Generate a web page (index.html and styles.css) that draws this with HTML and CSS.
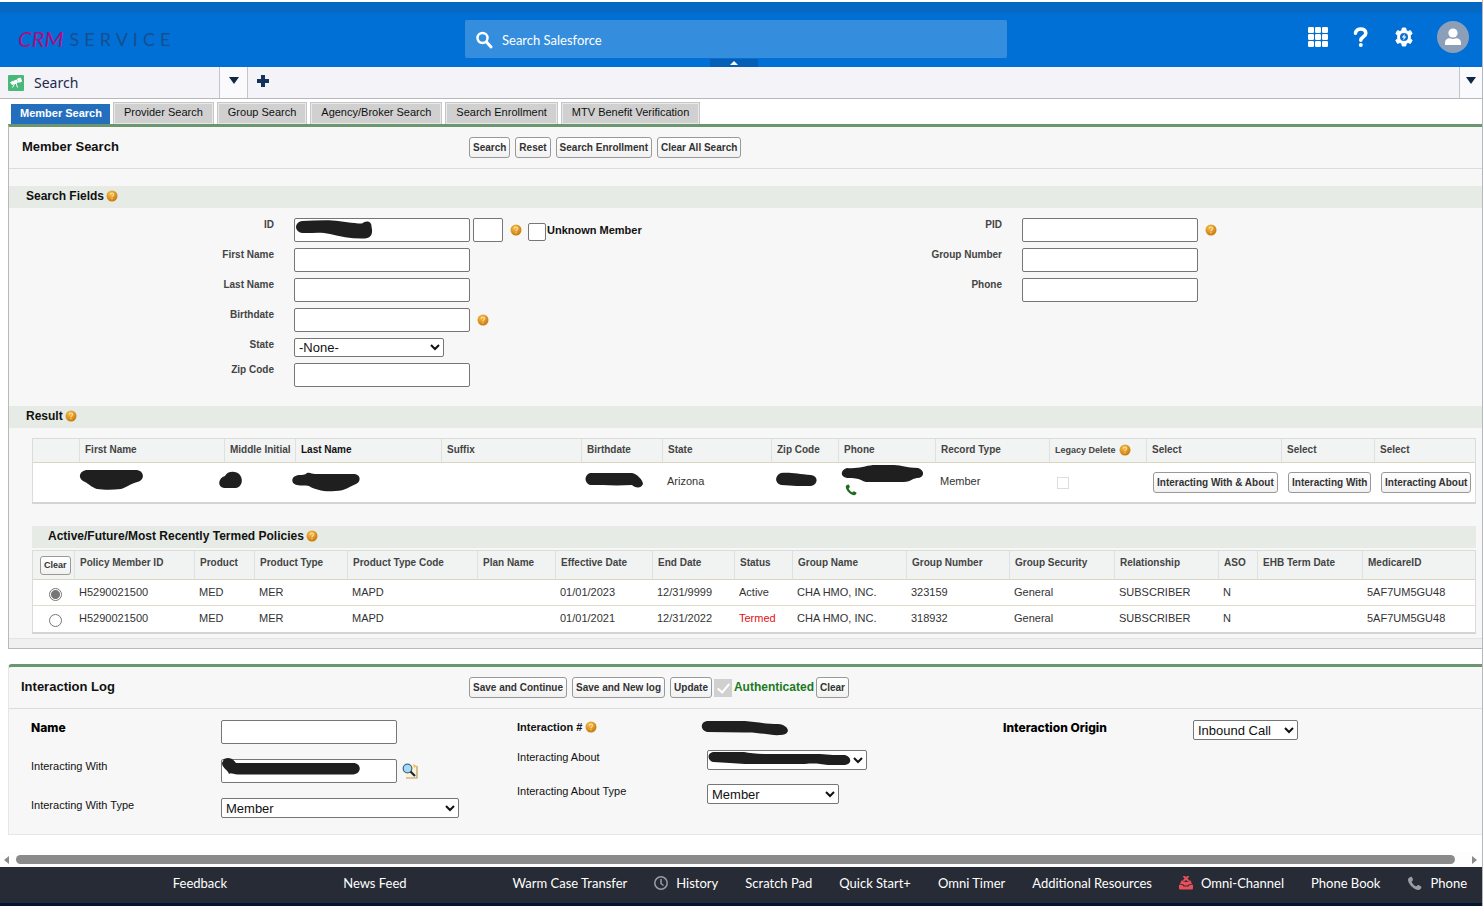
FILE: index.html
```html
<!DOCTYPE html>
<html lang="en">
<head>
<meta charset="utf-8">
<meta name="viewport" content="width=device-width, initial-scale=1">
<title>CRM Service - Member Search</title>
<link rel="stylesheet" href="styles.css">
</head>
<body>
<svg class="defs" aria-hidden="true">
  <defs>
    <radialGradient id="orange" cx="40%" cy="30%" r="70%">
      <stop offset="0" stop-color="#f7c04a"/><stop offset="1" stop-color="#c9790f"/>
    </radialGradient>
    <symbol id="help" viewBox="0 0 12 12">
      <circle cx="6" cy="6" r="5.500" fill="url(#orange)"/>
      <path d="M4.300 4.700C4.300 2.700 7.700 2.700 7.700 4.600C7.700 5.800 6 5.800 6 7.200M6 8.300V9.300" fill="none" stroke="#fbdc97" stroke-width="1.200"/>
    </symbol>
    <symbol id="handset" viewBox="0 0 16 16">
      <path d="M4.500.8C5.200.5 6.700 3.700 6.400 4.400C6.200 4.900 5 5.300 5 6C5.200 7.700 8 10.500 9.900 11C10.600 11 11.100 9.700 11.700 9.600C12.400 9.500 15.500 11.200 15.400 12C15.300 13.300 13.700 15 12.300 15C7.500 15 1 8.500 1 3.800C1 2.500 3 1 4.500.8Z" fill="currentColor"/>
    </symbol>
  </defs>
</svg>

<div class="app">
<header class="topbar">
  <div class="logo"><span class="logo-crm">CRM</span><span class="logo-service">SERVICE</span></div>
  <div class="searchbox">
    <svg width="18" height="18" viewBox="0 0 18 18" aria-hidden="true"><circle cx="6.500" cy="7" r="5" fill="none" stroke="#fff" stroke-width="2.500"/><path d="M10.500 11L15 16" stroke="#fff" stroke-width="3" stroke-linecap="round"/></svg>
    <input type="search" placeholder="Search Salesforce" aria-label="Search Salesforce">
  </div>
  <div class="top-icons">
    <button type="button" aria-label="Apps"><svg width="20" height="20" viewBox="0 0 20 20" fill="#fff"><rect width="6" height="6" rx="1.200"/><rect x="7" width="6" height="6" rx="1.200"/><rect x="14" width="6" height="6" rx="1.200"/><rect y="7" width="6" height="6" rx="1.200"/><rect x="7" y="7" width="6" height="6" rx="1.200"/><rect x="14" y="7" width="6" height="6" rx="1.200"/><rect y="14" width="6" height="6" rx="1.200"/><rect x="7" y="14" width="6" height="6" rx="1.200"/><rect x="14" y="14" width="6" height="6" rx="1.200"/></svg></button>
    <button type="button" aria-label="Help"><svg width="20" height="20" viewBox="0 0 20 20"><path d="M4.500 6.200C5 .6 14.800.6 14.800 6.200C14.800 9.800 9.800 9.500 9.800 13.300" fill="none" stroke="#fff" stroke-width="3.600" stroke-linecap="round"/><circle cx="9.800" cy="18" r="2" fill="#fff"/></svg></button>
    <button type="button" aria-label="Setup"><svg width="20" height="20" viewBox="0 0 20 20"><path d="M8.300 1h3.400l.5 2.500 1.800 1 2.400-.9 1.800 3-1.900 1.700v3.400l1.900 1.700-1.800 3-2.400-.9-1.800 1-.5 2.500H8.300l-.5-2.500-1.800-1-2.400.9-1.800-3 1.900-1.700V8.300L1.800 6.600l1.800-3 2.400.9 1.800-1z" fill="#fff" stroke="#fff" stroke-linejoin="round"/><circle cx="10" cy="10" r="4" fill="#0d6fd0"/><path d="M10.800 6.800L7.800 10.600H9.800L9.200 13.400L12.300 9.500H10.300Z" fill="#fff"/></svg></button>
    <button type="button" aria-label="Profile"><svg width="32" height="32" viewBox="0 0 32 32"><circle cx="16" cy="16" r="16" fill="#8ba0b8"/><circle cx="16" cy="12" r="4.600" fill="#fff"/><path d="M8 24V21.500C8 18.700 10.500 17 13 17.200C15 18.200 17 18.200 19 17.200C21.500 17 24 18.700 24 21.500V24Z" fill="#fff"/></svg></button>
  </div>
  <button class="pull" type="button" aria-label="Collapse header"><svg width="8" height="4" viewBox="0 0 8 4"><path d="M4 0L8 4H0Z" fill="#fff"/></svg></button>
</header>

<nav class="worktabs" aria-label="Workspace">
  <a class="worktab" href="#search"><svg width="16" height="16" viewBox="0 0 16 16" aria-hidden="true"><rect width="16" height="16" rx="1" fill="#48b97a"/><path d="M2.500 7.500L8.500 5L9.500 7.500L4 9.500ZM9.500 4L12.500 3L13.500 6.500L10.500 7.200ZM7 8L4.500 12.500M8 8L9.500 12.500" fill="#fff" stroke="#fff" stroke-width="1"/></svg>Search</a>
  <button class="tab-menu" type="button" aria-label="Tab menu"><svg width="10" height="7" viewBox="0 0 10 7"><path d="M0 0H10L5 7Z" fill="#0f2748"/></svg></button>
  <button class="tab-add" type="button" aria-label="New tab"><svg width="12" height="12" viewBox="0 0 12 12"><path d="M6 0V12M0 6H12" stroke="#14325c" stroke-width="4"/></svg></button>
  <button class="tab-menu tab-more" type="button" aria-label="More tabs"><svg width="10" height="7" viewBox="0 0 10 7"><path d="M0 0H10L5 7Z" fill="#0f2748"/></svg></button>
</nav>

<main class="content" id="search">
  <nav class="subtabs" aria-label="Search type">
    <a class="subtab current" href="#member">Member Search</a>
    <a class="subtab" href="#provider">Provider Search</a>
    <a class="subtab" href="#group">Group Search</a>
    <a class="subtab" href="#agency">Agency/Broker Search</a>
    <a class="subtab" href="#enrollment">Search Enrollment</a>
    <a class="subtab" href="#mtv">MTV Benefit Verification</a>
  </nav>

  <section class="panel" id="member">
    <div class="panel-head">
      <h1>Member Search</h1>
      <div class="actions">
        <button class="btn" type="button">Search</button><button class="btn" type="button">Reset</button><button class="btn" type="button">Search Enrollment</button><button class="btn" type="button">Clear All Search</button>
      </div>
    </div>

    <h2 class="bar">Search Fields<svg class="help"><use href="#help"/></svg></h2>
    <form class="fields">
      <div class="field-col">
        <div class="field"><label for="id">ID</label>
          <div class="control"><span class="covered"><input class="text" id="id" type="text"><svg class="cover" viewBox="294 218 176 24"><path d="M302 221C312 221 322 220 332 220.500C343 221 352 223.500 362 223.500C366 220 372 221 371.500 227C373 232 372 238 365 238.500C352 239 341 236.500 330 234C320 231.500 311 233.500 302 233C294 232 294 222 302 221Z"/></svg></span><input class="text suffix" type="text" aria-label="ID suffix"><svg class="help"><use href="#help"/></svg><span class="unknown"><input class="check" type="checkbox" id="unknown"><label for="unknown">Unknown Member</label></span></div></div>
        <div class="field"><label for="first">First Name</label><div class="control"><input class="text" id="first" type="text"></div></div>
        <div class="field"><label for="last">Last Name</label><div class="control"><input class="text" id="last" type="text"></div></div>
        <div class="field"><label for="birth">Birthdate</label><div class="control"><input class="text" id="birth" type="text"><svg class="help"><use href="#help"/></svg></div></div>
        <div class="field"><label for="state">State</label><div class="control"><select class="w-state" id="state"><option>-None-</option></select></div></div>
        <div class="field"><label for="zip">Zip Code</label><div class="control"><input class="text" id="zip" type="text"></div></div>
      </div>
      <div class="field-col">
        <div class="field"><label for="pid">PID</label><div class="control"><input class="text" id="pid" type="text"><svg class="help"><use href="#help"/></svg></div></div>
        <div class="field"><label for="groupno">Group Number</label><div class="control"><input class="text" id="groupno" type="text"></div></div>
        <div class="field"><label for="phone">Phone</label><div class="control"><input class="text" id="phone" type="text"></div></div>
      </div>
    </form>

    <h2 class="bar">Result<svg class="help"><use href="#help"/></svg></h2>
    <div class="results">
      <table class="grid members">
        <colgroup><col class="c46"><col class="c145"><col class="c71"><col class="c146"><col class="c140"><col class="c81"><col class="c109"><col class="c67"><col class="c97"><col class="c114"><col class="c97"><col class="c135"><col class="c93"><col></colgroup>
        <thead><tr><th></th><th>First Name</th><th>Middle Initial</th><th class="strong">Last Name</th><th>Suffix</th><th>Birthdate</th><th>State</th><th>Zip Code</th><th>Phone</th><th>Record Type</th><th class="small">Legacy Delete<svg class="help"><use href="#help"/></svg></th><th>Select</th><th>Select</th><th>Select</th></tr></thead>
        <tbody><tr>
          <td></td>
          <td class="mark"><svg viewBox="79 463 64 39"><path d="M86 470H137C144 471 145 479 139 481.500C132 483 127 487 121 489C113 490 104 490 97 489C91 487 89 484 85 482C78 479 78 472 86 470Z"/></svg></td>
          <td class="mark"><svg viewBox="224 463 64 39"><path d="M225 476C227 471 236 470 240 475C244 481 241 487 236 488H224C217 487 218 478 225 476Z"/></svg></td>
          <td class="mark"><svg viewBox="295 463 64 39"><path d="M299 475C302 475 305 475 307 473C310 472 312 474 315 474H355C361 475 361 482 356 484C350 486 346 491 335 491C325 492 315 490 309 486C305 485 301 486 297 485C291 484 290 476 299 475Z"/></svg></td>
          <td></td>
          <td class="mark"><svg viewBox="581 463 64 39"><path d="M590 473H632C637 474 643 480 643 484C641 489 635 488 632 485C616 486 602 485 590 485C584 483 584 475 590 473Z"/></svg></td>
          <td>Arizona</td>
          <td class="mark"><svg viewBox="771 463 64 39"><path d="M781 473C790 472 798 474 811 475C819 476 818 485 811 486C801 486 793 486 781 485C774 483 775 475 781 473Z"/></svg></td>
          <td class="mark"><svg viewBox="838 463 64 39"><path d="M847 468C858 469 864 466 873 465H894C902 465 906 468 918 468C925 470 925 478 917 478C911 479 910 482 904 482H866C861 481 862 478 847 478C840 477 840 470 847 468Z"/></svg><svg class="call"><use href="#handset"/></svg></td>
          <td>Member</td>
          <td><input class="legacy" type="checkbox" disabled aria-label="Legacy delete"></td>
          <td class="act"><button class="btn" type="button">Interacting With &amp; About</button></td>
          <td class="act"><button class="btn" type="button">Interacting With</button></td>
          <td class="act"><button class="btn" type="button">Interacting About</button></td>
        </tr></tbody>
      </table>

      <h3 class="bar policies-title">Active/Future/Most Recently Termed Policies<svg class="help"><use href="#help"/></svg></h3>
      <table class="grid policies">
        <colgroup><col class="c41"><col class="c120"><col class="c60"><col class="c93"><col class="c130"><col class="c78"><col class="c97"><col class="c82"><col class="c58"><col class="c114"><col class="c103"><col class="c105"><col class="c104"><col class="c39"><col class="c105"><col></colgroup>
        <thead><tr><th class="pick"><button class="btn tiny" type="button">Clear</button></th><th>Policy Member ID</th><th>Product</th><th>Product Type</th><th>Product Type Code</th><th>Plan Name</th><th>Effective Date</th><th>End Date</th><th>Status</th><th>Group Name</th><th>Group Number</th><th>Group Security</th><th>Relationship</th><th>ASO</th><th>EHB Term Date</th><th>MedicareID</th></tr></thead>
        <tbody>
          <tr><td class="pick"><input type="radio" name="policy" checked aria-label="Policy effective 01/01/2023"></td><td>H5290021500</td><td>MED</td><td>MER</td><td>MAPD</td><td></td><td>01/01/2023</td><td>12/31/9999</td><td>Active</td><td>CHA HMO, INC.</td><td>323159</td><td>General</td><td>SUBSCRIBER</td><td>N</td><td></td><td>5AF7UM5GU48</td></tr>
          <tr><td class="pick"><input type="radio" name="policy" aria-label="Policy effective 01/01/2021"></td><td>H5290021500</td><td>MED</td><td>MER</td><td>MAPD</td><td></td><td>01/01/2021</td><td>12/31/2022</td><td class="termed">Termed</td><td>CHA HMO, INC.</td><td>318932</td><td>General</td><td>SUBSCRIBER</td><td>N</td><td></td><td>5AF7UM5GU48</td></tr>
        </tbody>
      </table>
    </div>
    <div class="panel-foot"></div>
  </section>

  <section class="panel log">
    <div class="panel-head">
      <h1>Interaction Log</h1>
      <div class="actions">
        <button class="btn" type="button">Save and Continue</button><button class="btn" type="button">Save and New log</button><button class="btn" type="button">Update</button>
        <span class="auth"><input type="checkbox" id="auth" checked disabled><label for="auth">Authenticated</label><button class="btn" type="button">Clear</button></span>
      </div>
    </div>
    <form class="log-form">
      <div class="log-col wide">
        <div class="log-row"><label class="heavy" for="name">Name</label><div class="control"><input class="text" id="name" type="text"></div></div>
        <div class="log-row"><label for="with">Interacting With</label><div class="control"><span class="covered"><input class="text" id="with" type="text"><svg class="cover" viewBox="221 759 176 24"><path d="M224 759C230 756 234 760 236 763H353C362 763 362 774 353 774.500H238C232 774 231 772 229 774C228 770 222 768 222 763Z"/></svg></span><button class="lookup" type="button" aria-label="Look up"><svg width="16" height="16" viewBox="0 0 16 16"><path d="M4 2H15V15H4Z" fill="#fff3d2"/><path d="M15 3V15H4" fill="none" stroke="#b39a62" stroke-width="1.200"/><path d="M11 1L15 3L12 5Z" fill="#f2bd55"/><circle cx="5.500" cy="5.500" r="4.300" fill="#a9daf3" stroke="#3f6f94" stroke-width="1.300"/><path d="M8.500 8.500L13 13" stroke="#182a3a" stroke-width="2.200"/></svg></button></div></div>
        <div class="log-row"><label for="withtype">Interacting With Type</label><div class="control"><select class="w-with" id="withtype"><option>Member</option></select></div></div>
      </div>
      <div class="log-col">
        <div class="log-row short"><span class="caption">Interaction #<svg class="help"><use href="#help"/></svg></span><svg class="ink" viewBox="707 720 81 18"><path d="M707 721H745C755 722 768 724 778 724C789 725 792 734 781 735C770 736 760 732 745 732.500L707 732C700 730 700 722 707 721Z"/></svg></div>
        <div class="log-row"><label for="about">Interacting About</label><div class="control"><span class="covered"><select class="w-about" id="about"><option></option></select><svg class="cover" viewBox="707 750 160 20"><path d="M713 752H744C750 753 757 754 767 754H820C829 755 837 755 845 755C852 757 852 764 845 765H828C820 764 815 763 805 764H745C735 763 725 763 713 762C707 760 707 753 713 752Z"/></svg></span></div></div>
        <div class="log-row"><label for="abouttype">Interacting About Type</label><div class="control"><select class="w-type" id="abouttype"><option>Member</option></select></div></div>
      </div>
      <div class="log-col">
        <div class="log-row"><label class="heavy" for="origin">Interaction Origin</label><div class="control"><select class="w-origin" id="origin"><option>Inbound Call</option></select></div></div>
      </div>
    </form>
  </section>
</main>

<div class="hscroll" aria-hidden="true">
  <svg width="5" height="8" viewBox="0 0 5 8"><path d="M5 0V8L0 4Z" fill="#8a8a8a"/></svg>
  <div class="thumb"></div>
  <svg width="5" height="8" viewBox="0 0 5 8"><path d="M0 0V8L5 4Z" fill="#8a8a8a"/></svg>
</div>

<footer class="utility">
  <a class="far" href="#feedback">Feedback</a>
  <a class="mid" href="#news">News Feed</a>
  <a href="#warm">Warm Case Transfer</a>
  <a href="#history"><svg width="14" height="14" viewBox="0 0 14 14"><circle cx="7" cy="7" r="6.200" fill="none" stroke="#9a9da3" stroke-width="1.500"/><path d="M7 3V7.500L9.500 9.500" fill="none" stroke="#9a9da3" stroke-width="1.500"/></svg>History</a>
  <a href="#scratch">Scratch Pad</a>
  <a href="#quick">Quick Start+</a>
  <a href="#timer">Omni Timer</a>
  <a href="#resources">Additional Resources</a>
  <a href="#omni"><svg width="14" height="14" viewBox="0 0 14 14"><path d="M4.500 0L9.500 5M9.500 0L4.500 5" stroke="#e8505b" stroke-width="2"/><path d="M2.500 4.500H4L5 6H9L10 4.500H11.500L13 8H10L9 9.500H5L4 8H1Z" fill="#e8505b"/><path d="M0 8.800H3.500L4.500 10.500H9.500L10.500 8.800H14V12C14 13 13.500 13.500 12.500 13.500H1.500C.5 13.500 0 13 0 12Z" fill="#e8505b"/></svg>Omni-Channel</a>
  <a href="#book">Phone Book</a>
  <a href="#softphone"><svg class="soft" width="15" height="15"><use href="#handset"/></svg>Phone</a>
</footer>
</div>
</body>
</html>
```

FILE: styles.css
```css
* { box-sizing: border-box; }

body {
  margin: 0;
  background: #fff;
  color: #222;
  font-family: "Liberation Sans", Arial, sans-serif;
  font-size: 11px;
  line-height: 14px;
}

h1, h2, h3 { margin: 0; color: #111; }
a { color: inherit; text-decoration: none; }
button { font-family: inherit; cursor: pointer; }
.defs { position: absolute; width: 0; height: 0; }

.app {
  display: flex;
  flex-direction: column;
  min-height: 100vh;
  margin-right: 1px;
  padding-top: 2px;
  border-right: 1px solid #b5b8bd;
}

/* Header */
.topbar {
  position: relative;
  display: grid;
  grid-template-columns: 447px minmax(0, 542px) 1fr;
  align-items: start;
  height: 65px;
  padding: 18px 12px 0 18px;
  background: linear-gradient(#0568c2 0 10px, #006fd6 12px);
}
.logo { display: flex; align-items: center; gap: 6px; height: 38px; font-family: Lato, sans-serif; }
.logo-crm { font-size: 22px; font-style: italic; color: #ae0d82; }
.logo-service { font-size: 18px; letter-spacing: 5px; color: #174f8d; }
.searchbox {
  display: flex;
  align-items: center;
  gap: 6px;
  height: 38px;
  padding: 2px 11px 0;
  border-radius: 2px;
  background: #358ddd;
}
.searchbox input {
  flex: 1;
  border: 0;
  outline: 0;
  background: transparent;
  color: #fff;
  font: 13px Lato, "Open Sans", sans-serif;
}
.searchbox input::placeholder { color: #fff; opacity: 1; }
.top-icons { display: flex; align-items: center; justify-content: flex-end; gap: 23px; padding: 1px 1px 0 0; }
.top-icons button, .lookup, .tab-add { padding: 0; border: 0; background: none; line-height: 0; }
.pull {
  position: absolute;
  bottom: 0;
  left: 49%;
  transform: translateX(-16px);
  width: 48px;
  height: 8px;
  padding: 0;
  border: 0;
  background: #065fb4;
  line-height: 0;
}

/* Workspace tabs */
.worktabs { display: flex; height: 32px; border-bottom: 1px solid #b8b8bc; background: #f3f3f8; }
.worktab {
  display: flex;
  align-items: center;
  gap: 10px;
  width: 220px;
  padding-left: 8px;
  border-right: 1px solid #c4c4ca;
  color: #1d2a4d;
  font: 14px "Noto Sans", "Open Sans", sans-serif;
}
.tab-menu { width: 28px; padding: 0 0 4px; border: 0; border-right: 1px solid #c4c4ca; background: #fafafc; line-height: 0; }
.tab-add { width: 30px; padding-bottom: 4px; }
.tab-more { width: 23px; margin-left: auto; border-right: 0; border-left: 1px solid #c4c4ca; }

/* Search type tabs */
.content { flex: 1; padding: 3px 0 0 8px; }
.subtabs { display: flex; align-items: flex-end; gap: 3px; padding-left: 3px; }
.subtab {
  height: 22px;
  padding: 2px 10px 0;
  border: 1px solid #c6c6c6;
  border-bottom: 0;
  background: #d0d0d0;
  box-shadow: inset 0 0 0 1px #e9e9e9;
  color: #111;
}
.subtab.current { height: 20px; padding: 1px 7px 0 8px; border-color: #236fbe; background: #236fbe; box-shadow: none; color: #fff; font-weight: bold; }

/* Panels */
.panel {
  border: 1px solid #b9b9b9;
  border-top: 3px solid #6c9670;
  border-right: 0;
  background: #f7f7f7;
}
.panel-head {
  display: grid;
  grid-template-columns: 447px 1fr;
  align-items: center;
  min-height: 42px;
  padding-left: 13px;
  border-bottom: 1px solid #dcdcdc;
}
.panel-head h1 { padding-bottom: 2px; font-size: 13px; line-height: 16px; }
.actions { display: flex; align-items: center; gap: 5px; }
.btn {
  height: 21px;
  padding: 0 3px;
  border: 1px solid #999;
  border-radius: 3px;
  background: linear-gradient(#fff, #f1f1f1);
  color: #333;
  font-size: 10px;
  font-weight: bold;
  white-space: nowrap;
}
.btn.tiny { height: 19px; font-size: 9px; }
.bar {
  display: flex;
  align-items: center;
  gap: 2px;
  height: 22px;
  padding: 0 0 2px 17px;
  background: #e6ebe5;
  font-size: 12px;
}
.panel-head + .bar { margin-top: 17px; }
.help { flex: none; width: 12px; height: 12px; }

/* Search form */
.fields { display: grid; grid-template-columns: 728px 1fr; padding: 10px 0 19px; }
.field-col { display: flex; flex-direction: column; gap: 6px; }
.field { display: grid; grid-template-columns: 265px 1fr; column-gap: 20px; }
.field > label { color: #444; font-size: 10px; font-weight: bold; text-align: right; }
.control { display: flex; align-items: center; }
.text { width: 176px; height: 24px; padding: 1px 4px; border: 1px solid #767676; border-radius: 2px; background: #fff; font: 13px "Liberation Sans", Arial, sans-serif; }
.text.suffix { width: 30px; margin-left: 3px; }
.control .help { margin-left: 7px; }
.unknown { display: flex; align-items: center; margin-left: 6px; color: #111; font-weight: bold; }
.check { appearance: none; width: 18px; height: 18px; margin: 3px 1px 0 0; border: 1px solid #767676; border-radius: 2px; background: #fff; }
select {
  height: 20px;
  padding: 0;
  border: 1px solid #767676;
  border-radius: 2px;
  background: #fff;
  color: #111;
  font: 13px "Liberation Sans", Arial, sans-serif;
}
.field select { height: 19px; }
.w-state { width: 150px; }
.w-with { width: 238px; }
.w-about { width: 160px; }
.w-type { width: 132px; }
.w-origin { width: 105px; }
.covered { position: relative; display: flex; }
.cover { position: absolute; top: 0; left: 0; width: 100%; height: 100%; overflow: visible; fill: #1f1f1f; pointer-events: none; }

/* Result tables */
.results { padding: 10px 6px 4px 23px; }
.grid { width: 100%; table-layout: fixed; border-collapse: separate; border-spacing: 0; border: 1px solid #d9dcd9; background: #fff; }
.grid th {
  padding: 0 0 0 5px;
  border-bottom: 1px solid #d9d6bd;
  border-left: 1px solid #dfe0e0;
  background: #f2f3f3;
  color: #444;
  font-size: 10px;
  text-align: left;
  white-space: nowrap;
}
.grid th:first-child { border-left: 0; }
.grid th.strong { color: #111; }
.grid th.small { font-size: 9px; }
.grid th .help { margin-left: 3px; vertical-align: -3px; }
.grid td { padding: 0 0 0 5px; color: #333; white-space: nowrap; }
.members { border-bottom: 2px solid #d4d4d4; }
.members th { height: 24px; padding-bottom: 1px; }
.members td { height: 39px; padding-bottom: 3px; }
.members .mark { position: relative; padding: 0; }
.mark > svg { display: block; width: 64px; height: 39px; overflow: visible; fill: #1f1f1f; }
.mark > .call { position: absolute; bottom: 6px; left: 7px; width: 12px; height: 12px; color: #1f6a1d; }
.members td.act { padding: 0 0 0 7px; }
.legacy { appearance: none; display: block; width: 12px; height: 12px; margin: 4px 0 0 3px; border: 1px solid #ddd; background: #fff; }
.policies-title { margin: 22px 0 2px; padding-left: 16px; }
.policies { border-bottom: 2px solid #d4d4d4; }
.policies th { height: 29px; padding-bottom: 5px; background: #f0f3f2; }
.policies td { height: 26px; padding-bottom: 2px; border-bottom: 1px solid #e0dcc6; }
.policies tr:last-child td { border-bottom: 0; }
.policies th.pick { padding: 0 0 0 7px; }
.policies td.pick { padding: 3px 0 0 16px; line-height: 0; }
.pick input { appearance: none; width: 13px; height: 13px; margin: 0; border: 1px solid #767676; border-radius: 50%; background: #fff; }
.pick input:checked { background: radial-gradient(circle, #767676 4px, #fff 5px); }
.policies td.termed { color: #e01015; }
.panel-foot { height: 10px; border-top: 1px solid #e4e4e4; background: #f0f0f0; }

.c39 { width: 39px; } .c41 { width: 41px; } .c46 { width: 46px; } .c58 { width: 58px; }
.c60 { width: 60px; } .c67 { width: 67px; } .c71 { width: 71px; } .c78 { width: 78px; }
.c81 { width: 81px; } .c82 { width: 82px; } .c93 { width: 93px; } .c97 { width: 97px; }
.c103 { width: 103px; } .c104 { width: 104px; } .c105 { width: 105px; } .c109 { width: 109px; }
.c114 { width: 114px; } .c120 { width: 120px; } .c130 { width: 130px; } .c135 { width: 135px; }
.c140 { width: 140px; } .c145 { width: 145px; } .c146 { width: 146px; }

/* Interaction log */
.log { margin-top: 15px; border-color: #6c9670 #e6e6e6 #e6e6e6; border-radius: 4px 0 0 0; }
.log .panel-head { padding-left: 12px; grid-template-columns: 448px 1fr; }
.auth { display: flex; align-items: center; gap: 2px; margin-left: -3px; }
.auth label { padding-bottom: 2px; color: #1b7a1e; font-size: 12px; font-weight: bold; }
.auth input {
  appearance: none;
  width: 18px;
  height: 18px;
  margin: 0;
  background: linear-gradient(#d0d0d0, #d0d0d0);
}
.auth input::after { content: ""; display: block; width: 5px; height: 10px; margin: 2px 6px; border: solid #fff; border-width: 0 2px 2px 0; transform: rotate(40deg); }
.log-form { display: grid; grid-template-columns: 486px 486px 1fr; padding: 11px 0 16px 22px; }
.log-col { display: flex; flex-direction: column; gap: 14px; }
.log-col.wide { gap: 15px; }
.log-row { display: grid; grid-template-columns: 190px 1fr; align-items: start; color: #111; }
.heavy { color: #000; font: 800 12px/16px Inter, sans-serif; }
.caption { display: flex; align-items: center; gap: 3px; font-weight: bold; }
.short { height: 16px; }
.ink { width: 81px; height: 18px; overflow: visible; fill: #1f1f1f; }
.lookup { margin-left: 5px; }

/* Horizontal scrollbar */
.hscroll { display: flex; align-items: center; gap: 7px; height: 15px; padding: 0 5px 0 4px; background: #fdfdfd; }
.thumb { flex: 1; height: 9px; margin-right: 10px; border-radius: 5px; background: #8a8a8a; }

/* Utility bar */
.utility {
  display: flex;
  align-items: center;
  justify-content: flex-end;
  gap: 27px;
  height: 39px;
  padding: 0 15px 4px 0;
  border-bottom: 3px solid #04162f;
  background: #272b35;
  color: #fff;
  font: 13px Lato, "Open Sans", sans-serif;
  white-space: nowrap;
}
.utility a { display: flex; align-items: center; gap: 8px; }
.utility .far { margin-right: 89px; }
.utility .mid { margin-right: 79px; }
.soft { color: #9a9da3; }
```
